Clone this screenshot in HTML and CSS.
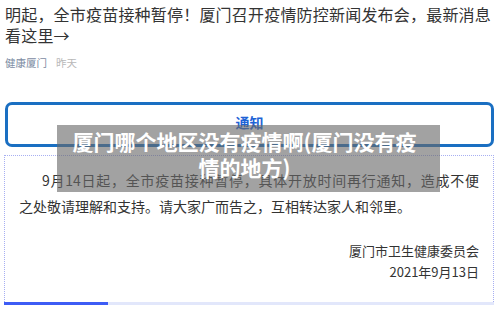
FILE: index.html
```html
<!DOCTYPE html>
<html lang="zh-CN">
<head>
  <meta charset="UTF-8" />
  <title>厦门哪个地区没有疫情啊</title>
  <meta name="viewport" content="width=device-width, initial-scale=1.0" />
  <link rel="stylesheet" href="styles.css">
</head>
<body>
  <div class="page">
    <h1 class="headline">明起，全市疫苗接种暂停！厦门召开疫情防控新闻发布会，最新消息看这里→</h1>
    <div class="meta">
      <span class="source">健康厦门</span>
      <span class="time">昨天</span>
    </div>

    <div class="notice-title">通知</div>

    <div class="notice">
      <p class="body">
        <span class="first">9月14日起，全市疫苗接种暂停，具体开放时间再行通知，造成不便</span>
        之处敬请理解和支持。请大家广而告之，互相转达家人和邻里。
      </p>
      <div class="sign">
        <div>厦门市卫生健康委员会</div>
        <div>2021年9月13日</div>
      </div>
    </div>
    <div class="progress"><div class="progress-fill"></div></div>

    <!-- caption over the picture -->
    <div class="caption">厦门哪个地区没有疫情啊(厦门没有疫情的地方)</div>
  </div>
</body>
</html>
```

FILE: styles.css
```css
body {
  margin: 0;
  background: #fff;
  color: #333;
  font-family: "Noto Sans CJK SC", "Noto Sans", sans-serif;
}
.page {
  position: relative;
  width: 500px;
  height: 317px;
  overflow: hidden;
}
.headline {
  margin: 0;
  padding: 4px 3px 0 5px;
  font-size: 16px;
  letter-spacing: 0.2px;
  line-height: 21px;
  font-weight: normal;
  color: #333;
}
.meta {
  display: flex;
  gap: 9px;
  margin-top: 10px;
  padding-left: 5px;
  font-size: 10.5px;
  line-height: 14px;
}
.source {
  color: #7d8ca3;
}
.time {
  color: #b8b8b8;
}
.notice-title {
  margin: 32px 6px 0 5px;
  height: 39px;
  border: 3px solid #1a6fc2;
  border-radius: 7px;
  text-align: center;
  font-size: 14px;
  font-weight: bold;
  line-height: 20px;
  padding-top: 7px;
  box-sizing: border-box;
  height: 45px;
  color: #1e63d6;
}
.notice {
  margin: 8px 6px 0 4px;
  height: 147px;
  box-sizing: border-box;
  border: 1px dotted #a7aff2;
  border-bottom: none;
  padding: 11px 14px 0 14px;
}
.body {
  margin: 0;
  font-size: 14px;
  line-height: 26px;
  color: #333;
}
.first {
  display: block;
  text-indent: 23px;
  text-align: justify;
  text-align-last: justify;
}
.sign {
  margin-top: 21px;
  text-align: right;
  font-size: 13px;
  line-height: 21px;
  color: #333;
}
.progress {
  margin: 0 6px 0 4px;
  height: 3px;
  background: #e2e7fb;
}
.progress-fill {
  width: 104px;
  height: 100%;
  background: #3d5cf5;
}
.caption {
  position: absolute;
  left: 57px;
  top: 125px;
  width: 383px;
  height: 67px;
  box-sizing: border-box;
  padding: 3px 18px 0 10px;
  background: rgba(105, 105, 105, 0.62);
  color: #fff;
  font-size: 21px;
  font-weight: bold;
  line-height: 26px;
  text-align: center;
}
```
